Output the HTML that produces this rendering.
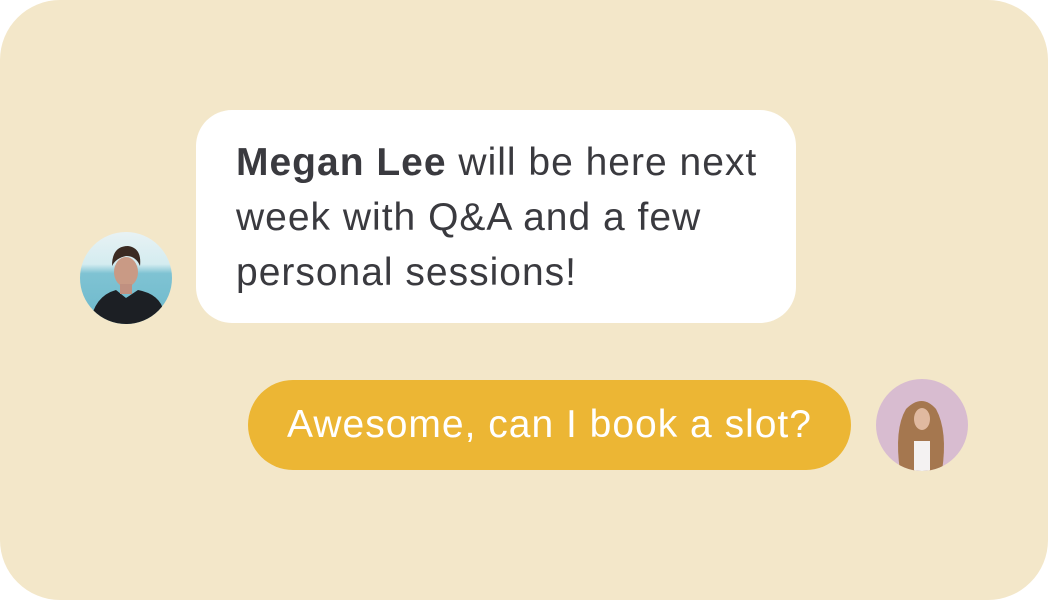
<html><head><style>
body{margin:0;width:1048px;height:600px;background:#fff;overflow:hidden;font-family:"Liberation Sans",sans-serif}
.bg{position:absolute;left:0;top:0;width:1048px;height:600px;background:#F3E7C9;border-radius:60px}
.b1{position:absolute;left:196px;top:110px;width:600px;height:213px;background:#fff;border-radius:36px;box-sizing:border-box;padding:25px 0 0 40px;font-size:39px;letter-spacing:1px;line-height:55px;color:#3a3a3f}
.b2{position:absolute;left:248px;top:380px;width:603px;height:90px;background:#ECB634;border-radius:45px;color:#fff;font-size:39px;letter-spacing:1px;line-height:90px;text-align:center}
.av{position:absolute;width:92px;height:92px;border-radius:50%;overflow:hidden}
</style></head><body>
<div class="bg"></div>
<div class="b1"><b>Megan Lee</b> will be here next<br>week with Q&amp;A and a few<br>personal sessions!</div>
<div class="b2">Awesome, can I book a slot?</div>
<div class="av" style="left:80px;top:232px;background:linear-gradient(#e8f2f4 0%,#d4ecf0 35%,#7fc3d3 45%,#6cb8cb 100%)">
<svg width="92" height="92"><path d="M10 92 Q14 64 36 58 L46 66 L58 58 Q80 62 84 80 L80 92Z" fill="#1c1f24"/><ellipse cx="46" cy="40" rx="12" ry="15" fill="#c99a85"/><path d="M32 34 Q32 14 48 14 Q62 16 60 34 Q56 24 46 24 Q36 26 32 34Z" fill="#3a2a22"/><rect x="40" y="52" width="12" height="10" fill="#c09080"/></svg></div>
<div class="av" style="left:876px;top:379px;background:#d8bcd0">
<svg width="92" height="92"><path d="M24 92 Q18 50 30 30 Q46 14 60 30 Q72 52 66 92Z" fill="#a5774f"/><ellipse cx="46" cy="40" rx="8" ry="11" fill="#e0b9a0"/><rect x="38" y="62" width="16" height="30" fill="#f4f2f2"/></svg></div>
</body></html>
